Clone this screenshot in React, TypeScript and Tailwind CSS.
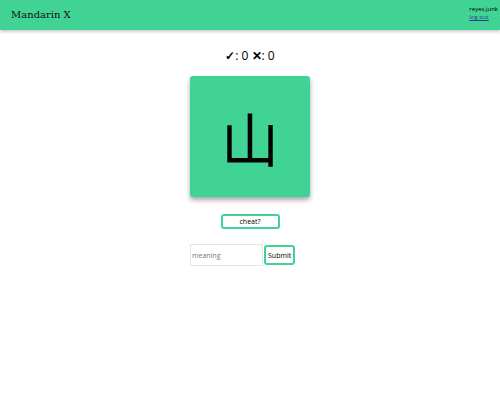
export default function App() {
  return (
    <div className="min-h-[400px] bg-white font-['Open_Sans',sans-serif]">
      <header className="h-[30px] bg-[#41d394] shadow-[0_2px_3px_rgba(0,0,0,0.2)] flex items-start justify-between pl-[11px] pr-[2px]">
        <div className="pt-[7px] font-['DejaVu_Serif',serif] text-[10px] text-[#111]">Mandarin X</div>
        <div className="pt-[5px] flex flex-col text-[6px] leading-[8px] text-black">
          <span>reyes.junk</span>
          <a href="#" className="underline text-[#333399]">log out</a>
        </div>
      </header>

      <main className="flex flex-col items-center">
        <div className="mt-[16px] text-[12px] text-black leading-[20px]">
          <span className="font-bold">✓</span>: 0 <span className="font-bold">✕</span>: 0
        </div>
        <div className="mt-[10px] w-[120px] h-[121px] rounded-[3px] bg-[#41d394] shadow-[0_3px_5px_rgba(0,0,0,0.35)] flex items-center justify-center">
          <span className="text-[58px] leading-none text-black font-['Noto_Sans_CJK_TC',sans-serif] font-normal">山</span>
        </div>
        <button className="mt-[17px] w-[59px] h-[15px] rounded-[3px] border-2 border-[#41d394] bg-white text-[7px] text-black leading-none">cheat?</button>
        <div className="mt-[15px] w-[120px] flex items-center gap-[1px]">
          <input
            placeholder="meaning"
            className="w-[73px] h-[22px] border border-[#e3e3e3] px-[1px] text-[7px] text-black placeholder:text-[#777] outline-none"
          />
          <button className="h-[20px] px-[2px] rounded-[3px] border-2 border-[#41d394] bg-white text-[7px] text-black leading-none">Submit</button>
        </div>
      </main>
    </div>
  );
}
